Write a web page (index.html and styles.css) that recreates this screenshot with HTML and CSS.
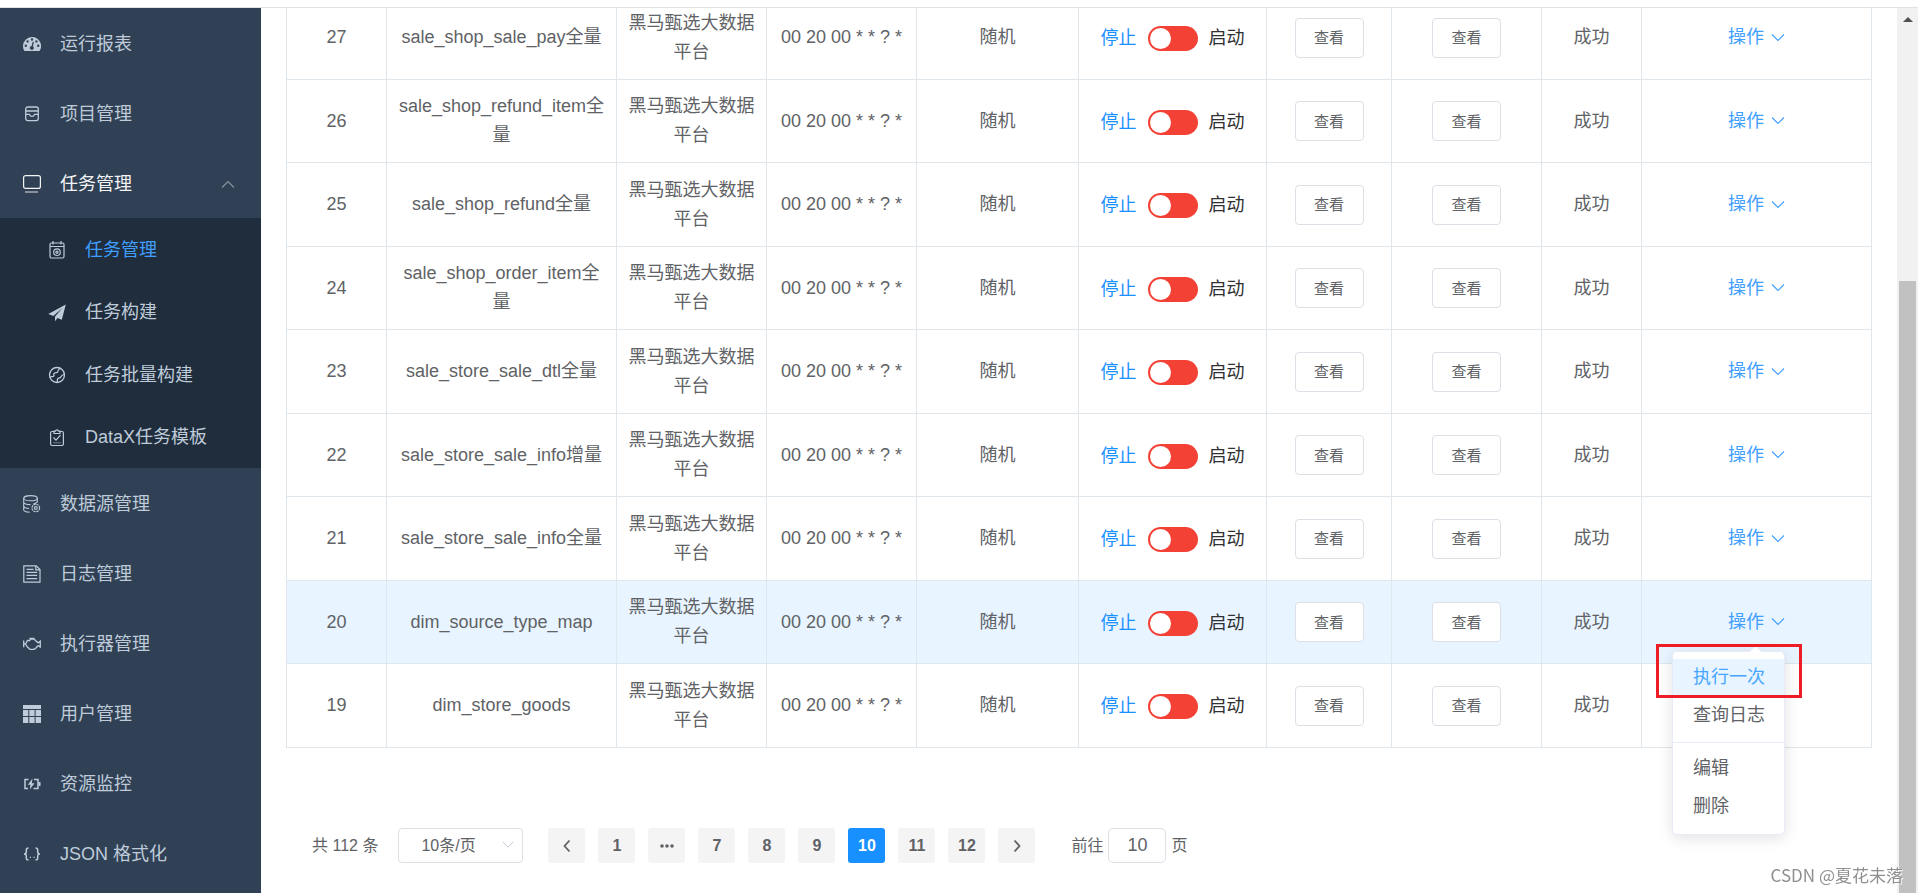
FILE: index.html
```html
<!DOCTYPE html>
<html lang="zh-CN">
<head>
<meta charset="utf-8">
<title>任务管理</title>
<link rel="stylesheet" href="styles.css">
</head>
<body>
<svg class="sprite" aria-hidden="true">
  <symbol id="chevron" viewBox="0 0 14 14"><path d="M1 3.5 7 9.5l6-6" fill="none" stroke="currentColor" stroke-width="1.1"/></symbol>
  <symbol id="arrow" viewBox="0 0 14 14"><path d="M9.5 1.5 4.5 7l5 5.500" fill="none" stroke="currentColor" stroke-width="1.8"/></symbol>
</svg>
<div class="page">
  <div class="topbar"></div>
  <div class="body">
    <nav class="sidebar">
      <a class="item" href="#"><svg class="icon" viewBox="0 0 18 18"><path fill="currentColor" fill-rule="evenodd" d="M9 2a9 9 0 0 0-9 9c0 1.800.5 3.600 1.500 5h15A9 9 0 0 0 9 2zM2.800 9.500a1.200 1.200 0 1 1 0 2.400 1.200 1.200 0 0 1 0-2.400zM4.600 5.200a1.200 1.200 0 1 1 0 2.400 1.200 1.200 0 0 1 0-2.400zM9 3.300a1.200 1.200 0 1 1 0 2.400 1.200 1.200 0 0 1 0-2.400zM13.400 5.200a1.200 1.200 0 1 1 0 2.400 1.200 1.200 0 0 1 0-2.400zM15.200 9.500a1.200 1.200 0 1 1 0 2.400 1.200 1.200 0 0 1 0-2.400zM9.700 6.800l1.200.3-1 4.100a2 2 0 1 1-1.300-.3z"/></svg><span>运行报表</span></a>
      <a class="item" href="#"><svg class="icon" viewBox="0 0 18 18"><g fill="none" stroke="currentColor" stroke-width="1.300"><rect x="2.700" y="2" width="12.600" height="13.600" rx="2"/><path d="M3 6h12M3 9.300h3.500c.5 2.800 4.500 2.800 5 0H15"/></g></svg><span>项目管理</span></a>
      <a class="item open" href="#"><svg class="icon" viewBox="0 0 18 18"><rect x=".6" y=".6" width="16.800" height="12.800" rx="2" fill="none" stroke="currentColor" stroke-width="1.200"/><path d="M2 17h13" stroke="currentColor" stroke-width="1.500" opacity=".6"/></svg><span>任务管理</span><svg class="caret" viewBox="0 0 14 14"><use href="#chevron"/></svg></a>
      <div class="submenu">
        <a class="item sub active" href="#"><svg class="icon" viewBox="0 0 18 18"><g fill="none" stroke="currentColor" stroke-width="1.200"><rect x="2" y="2" width="14" height="15" rx="1.500"/><path d="M2 5.500h14M5 0v3.500M13 0v3.500"/><circle cx="9" cy="11.200" r="3.300"/><circle cx="9" cy="11.200" r="1.100"/></g></svg><span>任务管理</span></a>
        <a class="item sub" href="#"><svg class="icon" viewBox="0 0 18 18"><path fill="currentColor" d="M17.800.5.300 10l5 2L14.500 4 7 12.500v4.800l2.500-3.300 4.300 1.700z"/></svg><span>任务构建</span></a>
        <a class="item sub" href="#"><svg class="icon" viewBox="0 0 18 18"><g fill="none" stroke="currentColor" stroke-width="1.300"><circle cx="9" cy="9" r="7.500"/><path d="M2 11.500c1.500-2 3 .2 3.800-1.500S4.800 8 6.500 7s3 .5 3.300-1.500S11.500 3.500 12 2M9 16.500c1-1.500-.5-2.500 1-4s2 .2 2.800-1.500 1.500-2 3.200-2.500"/></g></svg><span>任务批量构建</span></a>
        <a class="item sub" href="#"><svg class="icon" viewBox="0 0 18 18"><g fill="none" stroke="currentColor" stroke-width="1.200"><path d="M6 2.500H4c-.8 0-1.400.6-1.400 1.400v11.200c0 .8.600 1.400 1.400 1.400h10c.8 0 1.400-.6 1.400-1.400V3.900c0-.8-.6-1.400-1.400-1.400h-2M6 4.500V2.200h1.500C8 .3 10 .3 10.500 2.200H12v2.300zM5.500 8.500l2.500 2.600 4.500-5"/></g><path d="M5 13.800h8" stroke="currentColor" opacity=".5"/></svg><span>DataX任务模板</span></a>
      </div>
      <a class="item" href="#"><svg class="icon" viewBox="0 0 18 18"><g fill="none" stroke="currentColor" stroke-width="1.100"><ellipse cx="7.500" cy="3.200" rx="6.800" ry="2.600"/><path d="M.7 3.200v11.500c0 1.200 2.600 2.300 6 2.500M14.300 3.200v4M.7 7c0 1.500 3 2.600 6.800 2.600M.7 11c0 1.200 2 2.200 5.300 2.500M14.300 7c-1 .9-2.300 1.600-4 2"/><circle cx="12.800" cy="13" r="3.800" stroke-dasharray="2.400 .6"/><circle cx="12.800" cy="13" r="1.400"/></g></svg><span>数据源管理</span></a>
      <a class="item" href="#"><svg class="icon" viewBox="0 0 18 18"><g fill="none" stroke="currentColor" stroke-width="1.200"><path d="M.8.8h12.400l3.800 3.700v12.700H.8zM12.800 1v3.800H17"/><path d="M3.500 4.300h7M3.500 7.300h10.700M3.500 10.300h10.700M3.500 13.600h10.700"/></g></svg><span>日志管理</span></a>
      <a class="item" href="#"><svg class="icon" viewBox="0 0 18 18"><path fill="none" stroke="currentColor" stroke-width="1.300" d="M.7 5.500v6.800M.7 9H2.500l2-3.500h2L8 4h3l1.500 1.500 2.200 2h1l1.600-1.300v5.900l-1.600-1.100h-1l-2 2.200-1.700 1.200H7L4.500 12l-2-3M6.500 3.300h5"/></svg><span>执行器管理</span></a>
      <a class="item" href="#"><svg class="icon" viewBox="0 0 18 18"><path fill="currentColor" d="M0 0h18v4H0zM0 5h5.300v6H0zM6.300 5h5.300v6H6.300zM12.600 5H18v6h-5.400zM0 12h5.300v6H0zM6.300 12h5.300v6H6.300zM12.600 12H18v6h-5.400z"/></svg><span>用户管理</span></a>
      <a class="item" href="#"><svg class="icon" viewBox="0 0 18 18"><path fill="none" stroke="currentColor" stroke-width="1.500" d="M5.500 4.500H2v9h3M11 4.500h4v9h-4.500"/><path fill="currentColor" d="M9.500 3.500 4.800 9.700h2.700L6.800 14.500l4.700-6.200H8.800zM15.500 7h2v4h-2z"/></svg><span>资源监控</span></a>
      <a class="item" href="#"><svg class="icon" viewBox="0 0 18 18"><path fill="none" stroke="currentColor" stroke-width="1.500" d="M5.500 3C3.500 3 3.300 3.800 3.300 5v2c0 1.400-.8 2-2.300 2 1.500 0 2.300.6 2.300 2v2c0 1.200.2 2 2.200 2M12.500 3c2 0 2.200.8 2.200 2v2c0 1.400.8 2 2.300 2-1.500 0-2.300.6-2.300 2v2c0 1.200-.2 2-2.200 2"/><path fill="currentColor" d="M6.800 11.800h1.200V13H6.800zM10.500 11.800h1.200V13h-1.200z"/></svg><span>JSON 格式化</span></a>
    </nav>
    <main class="main">
      <table class="jobs">
        <colgroup><col class="c-id"><col class="c-name"><col class="c-mid"><col class="c-mid"><col class="c-route"><col class="c-switch"><col class="c-log"><col class="c-mid"><col class="c-id"><col class="c-ops"></colgroup>
        <tbody>
          <tr><td>27</td><td>sale_shop_sale_pay全量</td><td>黑马甄选大数据平台</td><td>00 20 00 * * ? *</td><td>随机</td><td><label class="switch"><span class="off">停止</span><input type="checkbox"><span class="on">启动</span></label></td><td><button class="view">查看</button></td><td><button class="view">查看</button></td><td>成功</td><td><div class="ops"><button class="link">操作<svg viewBox="0 0 14 14"><use href="#chevron"/></svg></button></div></td></tr>
          <tr><td>26</td><td>sale_shop_refund_item全量</td><td>黑马甄选大数据平台</td><td>00 20 00 * * ? *</td><td>随机</td><td><label class="switch"><span class="off">停止</span><input type="checkbox"><span class="on">启动</span></label></td><td><button class="view">查看</button></td><td><button class="view">查看</button></td><td>成功</td><td><div class="ops"><button class="link">操作<svg viewBox="0 0 14 14"><use href="#chevron"/></svg></button></div></td></tr>
          <tr><td>25</td><td>sale_shop_refund全量</td><td>黑马甄选大数据平台</td><td>00 20 00 * * ? *</td><td>随机</td><td><label class="switch"><span class="off">停止</span><input type="checkbox"><span class="on">启动</span></label></td><td><button class="view">查看</button></td><td><button class="view">查看</button></td><td>成功</td><td><div class="ops"><button class="link">操作<svg viewBox="0 0 14 14"><use href="#chevron"/></svg></button></div></td></tr>
          <tr><td>24</td><td>sale_shop_order_item全量</td><td>黑马甄选大数据平台</td><td>00 20 00 * * ? *</td><td>随机</td><td><label class="switch"><span class="off">停止</span><input type="checkbox"><span class="on">启动</span></label></td><td><button class="view">查看</button></td><td><button class="view">查看</button></td><td>成功</td><td><div class="ops"><button class="link">操作<svg viewBox="0 0 14 14"><use href="#chevron"/></svg></button></div></td></tr>
          <tr><td>23</td><td>sale_store_sale_dtl全量</td><td>黑马甄选大数据平台</td><td>00 20 00 * * ? *</td><td>随机</td><td><label class="switch"><span class="off">停止</span><input type="checkbox"><span class="on">启动</span></label></td><td><button class="view">查看</button></td><td><button class="view">查看</button></td><td>成功</td><td><div class="ops"><button class="link">操作<svg viewBox="0 0 14 14"><use href="#chevron"/></svg></button></div></td></tr>
          <tr><td>22</td><td>sale_store_sale_info增量</td><td>黑马甄选大数据平台</td><td>00 20 00 * * ? *</td><td>随机</td><td><label class="switch"><span class="off">停止</span><input type="checkbox"><span class="on">启动</span></label></td><td><button class="view">查看</button></td><td><button class="view">查看</button></td><td>成功</td><td><div class="ops"><button class="link">操作<svg viewBox="0 0 14 14"><use href="#chevron"/></svg></button></div></td></tr>
          <tr><td>21</td><td>sale_store_sale_info全量</td><td>黑马甄选大数据平台</td><td>00 20 00 * * ? *</td><td>随机</td><td><label class="switch"><span class="off">停止</span><input type="checkbox"><span class="on">启动</span></label></td><td><button class="view">查看</button></td><td><button class="view">查看</button></td><td>成功</td><td><div class="ops"><button class="link">操作<svg viewBox="0 0 14 14"><use href="#chevron"/></svg></button></div></td></tr>
          <tr class="current"><td>20</td><td>dim_source_type_map</td><td>黑马甄选大数据平台</td><td>00 20 00 * * ? *</td><td>随机</td><td><label class="switch"><span class="off">停止</span><input type="checkbox"><span class="on">启动</span></label></td><td><button class="view">查看</button></td><td><button class="view">查看</button></td><td>成功</td><td><div class="ops"><button class="link">操作<svg viewBox="0 0 14 14"><use href="#chevron"/></svg></button>
            <div class="menu">
              <button class="hover">执行一次</button>
              <button>查询日志</button>
              <hr>
              <button>编辑</button>
              <button>删除</button>
              <div class="marker"></div>
            </div></div></td></tr>
          <tr><td>19</td><td>dim_store_goods</td><td>黑马甄选大数据平台</td><td>00 20 00 * * ? *</td><td>随机</td><td><label class="switch"><span class="off">停止</span><input type="checkbox"><span class="on">启动</span></label></td><td><button class="view">查看</button></td><td><button class="view">查看</button></td><td>成功</td><td></td></tr>
        </tbody>
      </table>
      <div class="pagination">
        <span>共 112 条</span>
        <div class="size"><select aria-label="每页条数"><option>10条/页</option></select><svg viewBox="0 0 14 14"><use href="#chevron"/></svg></div>
        <div class="pager">
          <button aria-label="上一页"><svg viewBox="0 0 14 14"><use href="#arrow"/></svg></button>
          <button>1</button>
          <button aria-label="更多"><svg viewBox="0 0 14 14"><g fill="currentColor"><circle cx="2" cy="7" r="1.800"/><circle cx="7" cy="7" r="1.800"/><circle cx="12" cy="7" r="1.800"/></g></svg></button>
          <button>7</button>
          <button>8</button>
          <button>9</button>
          <button class="active">10</button>
          <button>11</button>
          <button>12</button>
          <button aria-label="下一页"><svg class="flip" viewBox="0 0 14 14"><use href="#arrow"/></svg></button>
        </div>
        <label class="jump">前往<input type="text" value="10">页</label>
      </div>
    </main>
    <div class="scrollbar"><svg viewBox="0 0 10 5"><path d="M0 5 5 0l5 5z" fill="#505050"/></svg><div class="thumb"></div></div>
  </div>
</div>
<div class="watermark">CSDN @夏花未落</div>
</body>
</html>
```
FILE: styles.css
```css
* { box-sizing: border-box; }
body {
  margin: 0;
  font: 18px/29px "Liberation Sans", "Noto Sans CJK SC", sans-serif;
  color: #606266;
  background: #fff;
}
button, input, select { font: inherit; color: inherit; }
button { cursor: pointer; }
.sprite { position: absolute; width: 0; height: 0; }
.page { height: 100vh; display: flex; flex-direction: column; overflow: hidden; }
.topbar { flex: none; height: 8px; border-bottom: 1px solid #dfe2e4; }
.body { flex: 1; min-height: 0; display: flex; }

.sidebar { flex: none; width: 261px; background: #304156; overflow: hidden; }
.item {
  display: flex;
  align-items: center;
  height: 70px;
  padding: 2px 26px 0 23px;
  gap: 19px;
  color: #bfcbd9;
  text-decoration: none;
}
.icon { flex: none; width: 18px; height: 18px; }
.item.open { color: #f4f4f5; }
.caret { width: 14px; height: 14px; margin-left: auto; color: #8a939f; transform: rotate(180deg); }
.submenu { background: #1f2d3d; display: flex; flex-direction: column; height: 250px; }
.item.sub { flex: 1; padding-left: 48px; }
.item.active span { color: #409eff; }

.main { flex: 1; min-width: 0; padding: 0 25px; overflow: hidden; }
.jobs {
  width: 100%;
  margin-top: -12px;
  table-layout: fixed;
  border-collapse: separate;
  border-spacing: 0;
  border-left: 1px solid #dfe6ec;
}
.c-id { width: 100px; }
.c-mid { width: 150px; }
.c-route { width: 162px; }
.c-switch { width: 188px; }
.c-log { width: 125px; }
.jobs td {
  height: 84px;
  padding: 0 11px;
  text-align: center;
  vertical-align: middle;
  border-right: 1px solid #dfe6ec;
  border-bottom: 1px solid #dfe6ec;
  overflow-wrap: anywhere;
}
.jobs tr:nth-child(even) td { height: 83px; }
.jobs .current td { background: #e8f4ff; }

.switch { display: flex; align-items: center; justify-content: center; gap: 11px; padding-top: 2px; white-space: nowrap; }
.off { color: #1890ff; }
.on { color: #303133; }
.switch input {
  appearance: none;
  display: flex;
  flex: none;
  width: 50px;
  height: 25px;
  margin: 0;
  padding: 2px;
  border-radius: 13px;
  background: #f34235;
}
.switch input::before { content: ""; width: 21px; height: 21px; border-radius: 50%; background: #fff; }
.view {
  width: 69px;
  height: 40px;
  padding: 0;
  font-size: 15px;
  vertical-align: middle;
  border: 1px solid #dcdfe6;
  border-radius: 4px;
  background: #fff;
}
.ops { position: relative; display: inline-block; vertical-align: middle; }
.link {
  display: flex;
  align-items: center;
  gap: 7px;
  padding: 0;
  border: 0;
  background: none;
  color: #409eff;
}
.link svg { width: 14px; height: 14px; }

.menu {
  position: absolute;
  z-index: 2;
  top: 43px;
  right: 0;
  width: 113px;
  padding: 7px 0 8px;
  border: 1px solid #e6ebf5;
  border-radius: 5px;
  background: #fff;
  box-shadow: 0 3px 15px rgba(0, 0, 0, .12);
}
.menu::before {
  content: "";
  position: absolute;
  top: -4px;
  left: 78px;
  width: 9px;
  height: 9px;
  background: #fff;
  transform: rotate(45deg);
}
.menu button {
  position: relative;
  display: block;
  width: 100%;
  height: 38px;
  padding: 0 20px;
  border: 0;
  background: none;
  text-align: left;
  white-space: nowrap;
}
.menu .hover { background: #e8f4ff; color: #46a6ff; }
.menu hr { height: 1px; margin: 7px 0; border: 0; background: #e6ebf5; }
.marker {
  position: absolute;
  top: -8px;
  left: -17px;
  width: 146px;
  height: 54px;
  border: 3px solid #ee1c25;
}

.pagination { display: flex; align-items: center; margin-top: 80px; padding-left: 26px; font-size: 16px; white-space: nowrap; }
.size { position: relative; width: 125px; margin-left: 20px; }
.size select {
  appearance: none;
  display: block;
  width: 100%;
  height: 35px;
  padding: 0 30px 0 22px;
  border: 1px solid #dcdfe6;
  border-radius: 4px;
  background: #fff;
}
.size svg { position: absolute; right: 9px; top: 11px; width: 12px; height: 12px; color: #c0c4cc; }
.pager { display: flex; gap: 13px; margin: 0 36px 0 25px; }
.pager button {
  display: flex;
  align-items: center;
  justify-content: center;
  width: 37px;
  height: 35px;
  padding: 0;
  border: 0;
  border-radius: 3px;
  background: #f4f4f5;
  font-weight: bold;
}
.pager svg { width: 14px; height: 14px; }
.pager .flip { transform: rotate(180deg); }
.pager .active { background: #1890ff; color: #fff; }
.jump { display: flex; align-items: center; gap: 5px; }
.jump input {
  width: 58px;
  height: 35px;
  padding: 0;
  border: 1px solid #dcdfe6;
  border-radius: 5px;
  font-size: 18px;
  text-align: center;
}

.scrollbar {
  flex: none;
  display: flex;
  flex-direction: column;
  align-items: center;
  width: 21px;
  padding-top: 9px;
  background: #f1f1f1;
}
.scrollbar svg { width: 10px; height: 5px; }
.thumb { width: 17px; flex: 1; margin-top: 259px; background: #c1c1c1; }
.watermark {
  position: fixed;
  z-index: 3;
  right: 15px;
  bottom: 4px;
  font-family: "Noto Sans CJK SC", sans-serif;
  font-size: 17px;
  color: #8f8f8f;
  text-shadow: 1px 1px 1px #fff;
}
```
